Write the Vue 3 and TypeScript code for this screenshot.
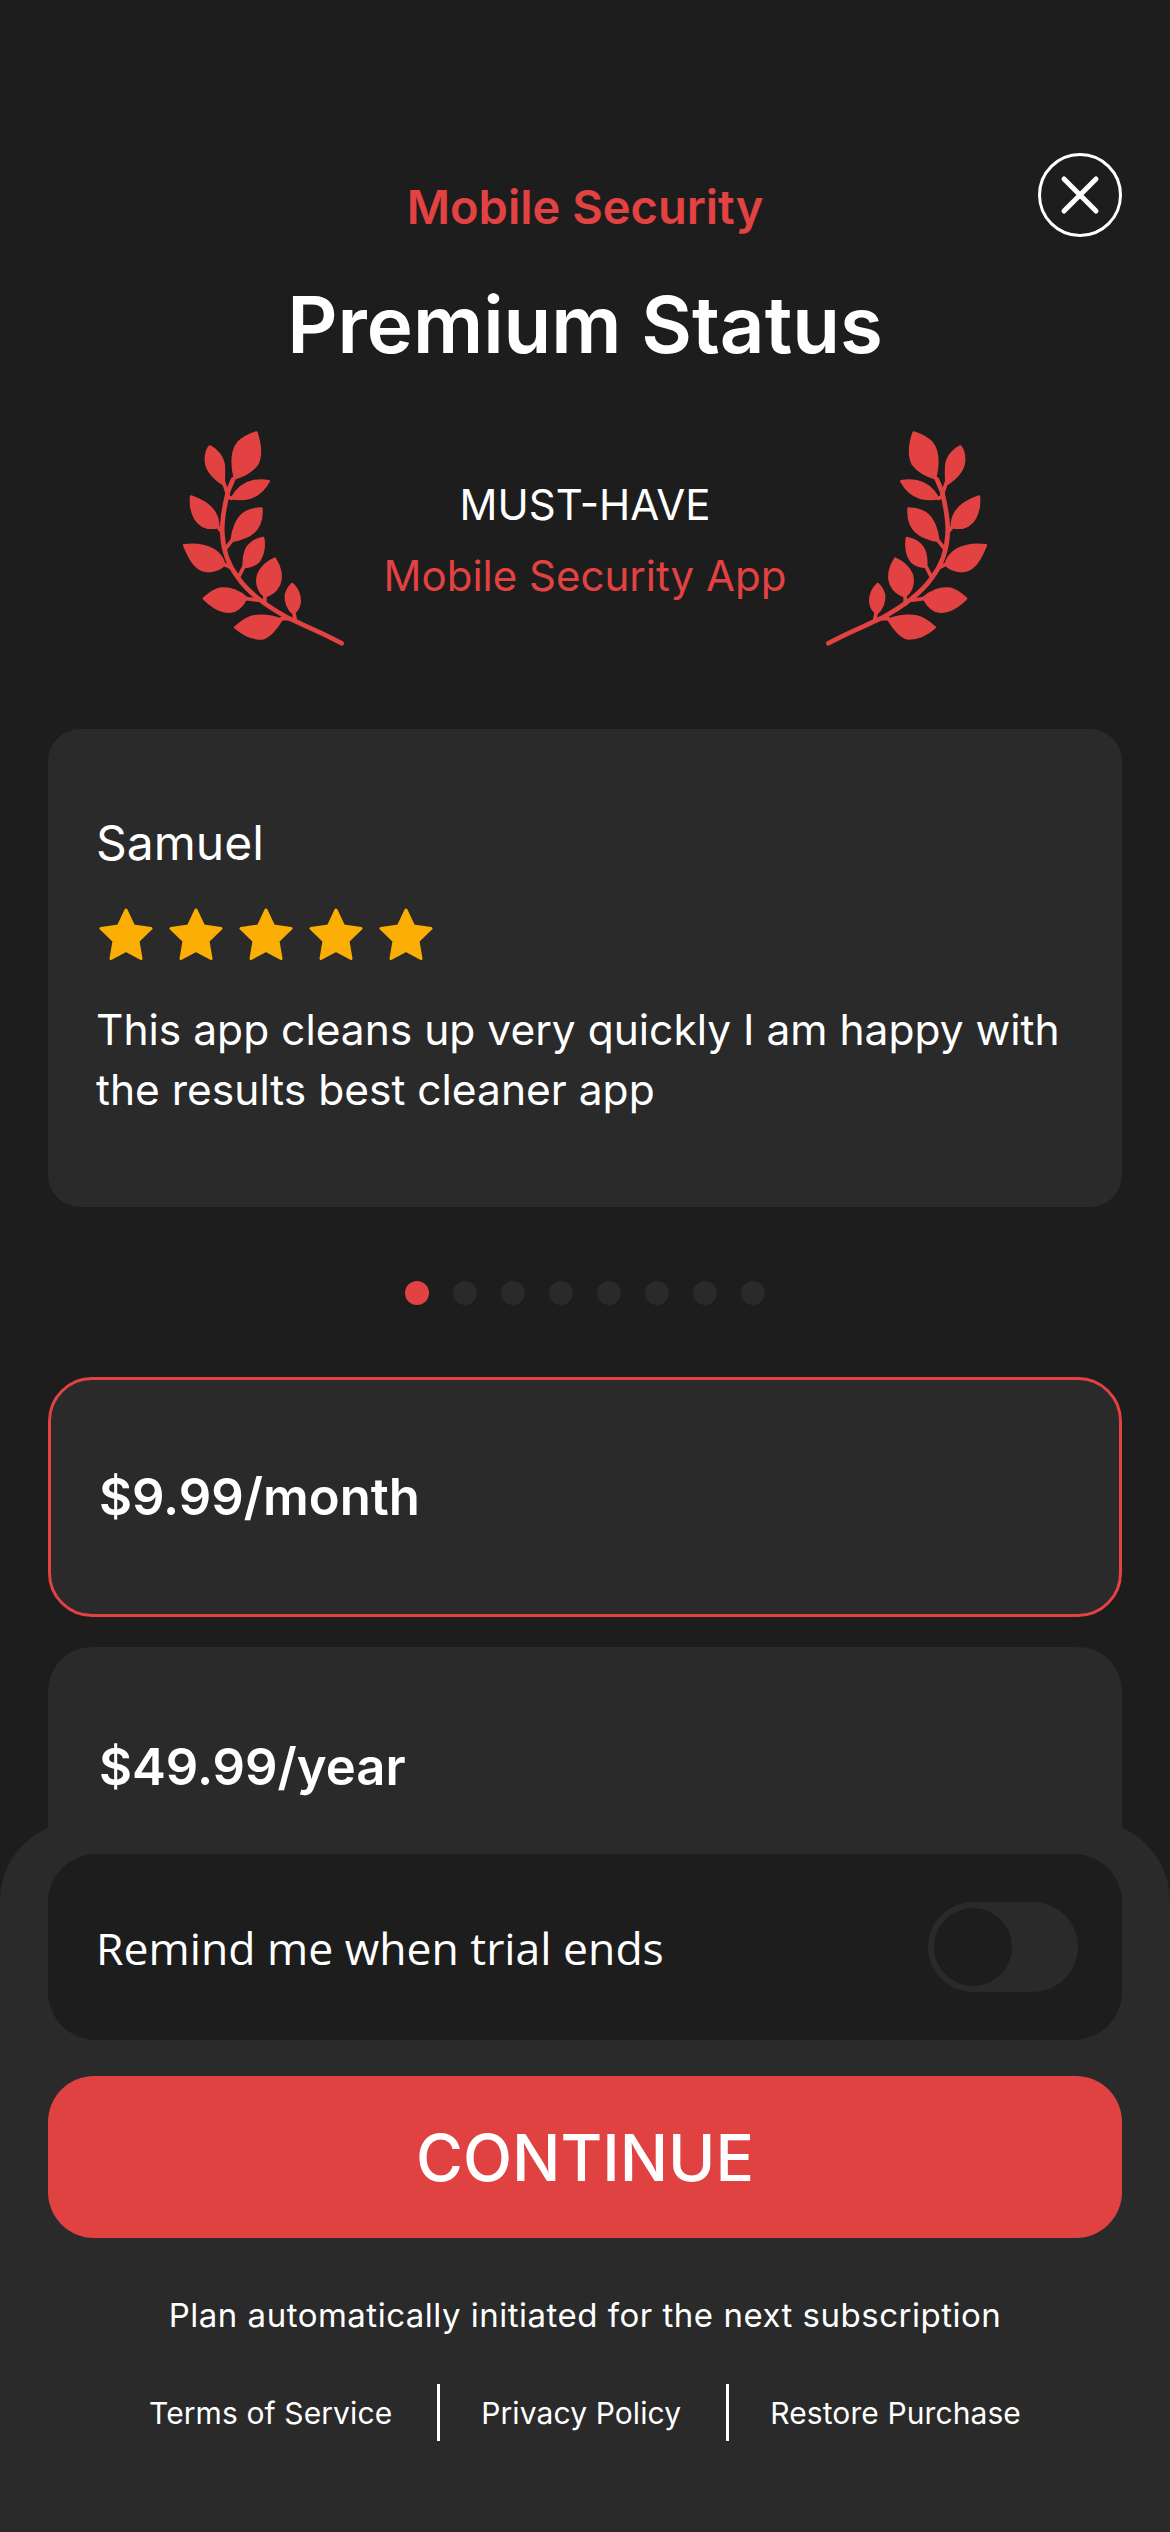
<script setup lang="ts">
const dots = [0, 1, 2, 3, 4, 5, 6, 7]
const stars = [0, 1, 2, 3, 4]
const sides = ['left', 'right']

// leaves of the laurel branch
const leaves = [
  'M255 232C245 190 245 150 265 125C280 110 300 100 320 94C332 130 335 165 322 190C305 212 280 225 255 232Z',
  'M222 250C190 230 168 205 168 175C168 155 172 145 180 136C200 145 218 165 222 190C224 215 222 235 222 250Z',
  'M245 292C262 262 285 245 310 240C330 237 345 238 357 240C345 262 325 282 300 290C280 295 262 295 245 292Z',
  'M205 378C175 385 150 375 135 350C125 330 122 305 124 286C150 295 180 310 195 335C204 350 206 365 205 378Z',
  'M245 420C248 385 262 350 285 335C300 326 320 322 335 322C337 350 330 375 312 392C295 408 270 415 245 420Z',
  'M225 490C205 510 170 518 145 500C125 485 112 455 103 432C130 428 165 432 190 445C208 455 220 475 225 490Z',
  'M282 497C280 470 285 440 305 425C315 417 330 412 340 410C345 435 340 465 325 482C312 494 297 497 282 497Z',
  'M345 585C325 570 318 545 325 520C335 497 355 480 375 472C390 495 398 525 388 550C378 570 360 582 345 585Z',
  'M430 636C415 625 405 600 408 580C412 565 420 555 427 548C440 560 450 580 450 600C448 618 440 630 430 636Z',
  'M290 590C270 570 240 558 210 562C190 566 175 580 162 592C180 612 210 632 240 632C265 630 280 610 290 590Z',
  'M395 655C370 645 340 640 310 645C290 650 270 665 256 678C275 695 305 712 335 712C360 708 380 680 395 655Z',
]
const twigs =
  'M222 245L235 285M245 292L232 285M205 378L218 395M245 420L225 445M225 490L245 500M282 497L265 530M290 592L325 597M345 585L345 608M432 635L436 655M395 652L418 652'
</script>

<template>
  <div class="page">
    <button class="close" aria-label="Close">
      <svg viewBox="0 0 84 84" width="84" height="84">
        <circle cx="42" cy="42" r="40.5" fill="none" stroke="#fff" stroke-width="3" />
        <path d="M26 26L58 58M58 26L26 58" stroke="#fff" stroke-width="5" stroke-linecap="round" />
      </svg>
    </button>

    <div class="brand">Mobile Security</div>
    <h1 class="title">Premium Status</h1>

    <div class="award">
      <template v-for="side in sides" :key="side">
        <svg class="laurel" :class="side" viewBox="100 90 485 650" width="162" height="217">
          <path
            d="M575 726C520 695 460 672 415 650C360 620 300 580 265 530C235 490 220 450 218 400C215 360 225 310 235 270L250 235"
            fill="none"
            stroke="#e24242"
            stroke-width="14"
            stroke-linecap="round"
          />
          <path :d="twigs" fill="none" stroke="#e24242" stroke-width="11" stroke-linecap="round" />
          <path
            v-for="(d, i) in leaves"
            :key="i"
            :d="d"
            fill="#e24242"
            stroke="#e24242"
            stroke-width="7"
            stroke-linejoin="round"
          />
        </svg>
        <div v-if="side === 'left'" class="award-text">
          <div class="must">MUST-HAVE</div>
          <div class="award-app">Mobile Security App</div>
        </div>
      </template>
    </div>

    <section class="review">
      <div class="reviewer">Samuel</div>
      <div class="stars">
        <svg v-for="s in stars" :key="s" viewBox="0 0 54 53" width="54" height="53">
          <path
            d="M27 2L34.500 18L52 20.500L39 33L42 50.500L27 42.500L12 50.500L15 33L2 20.500L19.500 18Z"
            fill="#fbae03"
            stroke="#fbae03"
            stroke-width="3"
            stroke-linejoin="round"
          />
        </svg>
      </div>
      <p class="quote">This app cleans up very quickly I am happy with the results best cleaner app</p>
    </section>

    <div class="dots">
      <span v-for="d in dots" :key="d" class="dot" :class="{ active: d === 0 }"></span>
    </div>

    <div class="plans">
      <div class="plan selected">$9.99/month</div>
      <div class="plan">$49.99/year</div>
    </div>

    <div class="sheet">
      <div class="remind">
        <span>Remind me when trial ends</span>
        <span class="toggle"><span class="knob"></span></span>
      </div>
      <button class="continue">CONTINUE</button>
      <p class="note">Plan automatically initiated for the next subscription</p>
      <div class="links">
        <a>Terms of Service</a>
        <a>Privacy Policy</a>
        <a>Restore Purchase</a>
      </div>
    </div>
  </div>
</template>

<style>
html,
body {
  margin: 0;
  background: #1d1d1d;
}
</style>

<style scoped>
.page {
  position: relative;
  width: 1170px;
  height: 2532px;
  overflow: hidden;
  box-sizing: border-box;
  padding: 179px 48px 0;
  background: #1d1d1d;
  color: #fff;
  font-family: Inter, "Liberation Sans", sans-serif;
}
.close {
  position: absolute;
  top: 153px;
  left: 1038px;
  width: 84px;
  height: 84px;
  padding: 0;
  border: 0;
  background: none;
}
.close svg {
  display: block;
}
.brand {
  font-size: 47px;
  line-height: 56px;
  font-weight: 600;
  color: #e24242;
  text-align: center;
}
.title {
  margin: 46px 0 0;
  font-size: 78px;
  line-height: 88px;
  font-weight: 600;
  text-align: center;
}
.award {
  display: flex;
  justify-content: center;
  align-items: center;
  margin-top: 62px;
  height: 217px;
}
.laurel {
  flex: none;
}
.laurel.right {
  transform: scaleX(-1);
}
.award-text {
  width: 480px;
  text-align: center;
  font-size: 42px;
  line-height: 71px;
}
.must {
  color: #fff;
}
.award-app {
  color: #e24242;
}
.review {
  box-sizing: border-box;
  height: 478px;
  margin-top: 81px;
  padding: 86px 48px;
  background: #2a2a2a;
  border-radius: 32px;
}
.reviewer {
  font-size: 48px;
  line-height: 56px;
}
.stars {
  display: flex;
  gap: 16px;
  margin-top: 37px;
  margin-left: 3px;
}
.stars svg {
  display: block;
}
.quote {
  margin: 39px 0 0;
  font-size: 42.500px;
  line-height: 60px;
}
.dots {
  display: flex;
  justify-content: center;
  gap: 24px;
  margin-top: 74px;
}
.dot {
  width: 24px;
  height: 24px;
  border-radius: 50%;
  background: #2a2a2a;
}
.dot.active {
  background: #e24242;
}
.plans {
  display: flex;
  flex-direction: column;
  gap: 30px;
  margin-top: 72px;
}
.plan {
  display: flex;
  align-items: center;
  box-sizing: border-box;
  height: 240px;
  padding: 0 51px 2px;
  background: #2a2a2a;
  border-radius: 44px;
  font-size: 50.800px;
  font-weight: 600;
}
.plan.selected {
  border: 3px solid #e24242;
  padding: 0 48px 2px;
}
.sheet {
  position: absolute;
  left: 0;
  right: 0;
  bottom: 0;
  box-sizing: border-box;
  height: 711px;
  padding: 33px 48px 0;
  background: #2a2a2a;
  border-radius: 80px 80px 0 0;
}
.remind {
  display: flex;
  align-items: center;
  justify-content: space-between;
  box-sizing: border-box;
  height: 186px;
  padding: 0 44px 0 48px;
  background: #1d1d1d;
  border-radius: 48px;
  font-family: "Open Sans", sans-serif;
  font-size: 44.500px;
}
.toggle {
  box-sizing: border-box;
  width: 150px;
  height: 90px;
  padding: 6px;
  background: #2a2a2a;
  border-radius: 45px;
}
.knob {
  display: block;
  width: 78px;
  height: 78px;
  background: #1d1d1d;
  border-radius: 50%;
}
.continue {
  display: block;
  width: 100%;
  height: 162px;
  margin-top: 36px;
  padding: 0;
  border: 0;
  background: #e04242;
  border-radius: 46px;
  color: #fff;
  font-family: inherit;
  font-size: 64px;
  font-weight: 500;
}
.note {
  margin: 57px 0 0;
  font-size: 33px;
  line-height: 40px;
  text-align: center;
  letter-spacing: 0.5px;
}
.links {
  display: flex;
  justify-content: center;
  margin-top: 49px;
  font-size: 30px;
}
.links a {
  display: flex;
  align-items: center;
  height: 57px;
  padding: 0 45px 0 41px;
  letter-spacing: 0.1px;
}
.links a + a {
  border-left: 3px solid #fff;
}
.links a:first-child {
  padding-left: 0;
}
.links a:last-child {
  padding-right: 0;
}
</style>
